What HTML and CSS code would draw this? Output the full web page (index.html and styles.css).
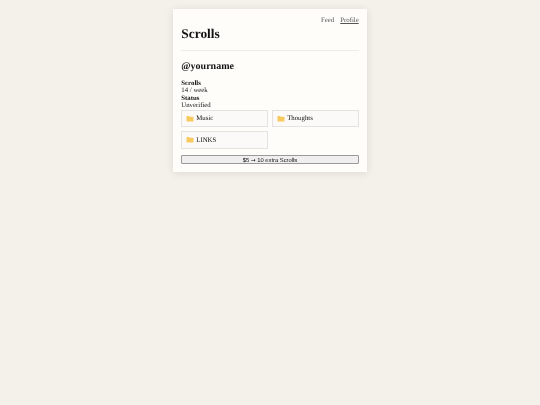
FILE: index.html
```html
<!DOCTYPE html>
<html lang="en">
<head>
    <meta charset="UTF-8">
    <meta name="viewport" content="width=device-width, initial-scale=1.0">
    <title>Scrolls</title>
    <link rel="stylesheet" href="styles.css">
</head>
<body>
    <div class="card">
        <nav class="nav">
            <a href="#" class="nav-link">Feed</a>
            <a href="#" class="nav-link current">Profile</a>
        </nav>
        <h1 class="title">Scrolls</h1>
        <hr class="divider">
        <h2 class="username">@yourname</h2>

        <div class="stats">
            <div><b>Scrolls</b></div>
            <div>14 / week</div>
            <div><b>Status</b></div>
            <div>Unverified</div>
        </div>

        <div class="folders">
            <a href="#" class="folder">
                <svg class="folder-icon" viewBox="0 0 16 14"><path d="M1 3a1 1 0 0 1 1-1h4l1.500 1.500H14a1 1 0 0 1 1 1V12a1 1 0 0 1-1 1H2a1 1 0 0 1-1-1z" fill="#f7ca5e"/></svg>
                Music
            </a>
            <a href="#" class="folder">
                <svg class="folder-icon" viewBox="0 0 16 14"><path d="M1 3a1 1 0 0 1 1-1h4l1.500 1.500H14a1 1 0 0 1 1 1V12a1 1 0 0 1-1 1H2a1 1 0 0 1-1-1z" fill="#f7ca5e"/></svg>
                Thoughts
            </a>
            <a href="#" class="folder">
                <svg class="folder-icon" viewBox="0 0 16 14"><path d="M1 3a1 1 0 0 1 1-1h4l1.500 1.500H14a1 1 0 0 1 1 1V12a1 1 0 0 1-1 1H2a1 1 0 0 1-1-1z" fill="#f7ca5e"/></svg>
                LINKS
            </a>
        </div>

        <button class="buy-button">$5 <span class="arrow">→</span> 10 extra Scrolls</button>
    </div>
</body>
</html>
```

FILE: styles.css
```css
body {
    font-family: "Liberation Serif", "Times New Roman", serif;
    font-size: 6.8px;
    line-height: 7.4px;
    text-rendering: geometricPrecision;
    background-color: #f4f1ea;
    color: #111;
    margin: 0;
    padding: 8.5px 0 0;
    display: flex;
    justify-content: center;
    align-items: flex-start;
    min-height: 396px;
}

.card {
    background-color: #fffdfa;
    width: 177.400px;
    padding: 8px 8.300px 8px;
    box-shadow: 0 1px 8px rgba(0, 0, 0, 0.1);
    display: flex;
    flex-direction: column;
    will-change: transform;
}

.nav {
    display: flex;
    justify-content: flex-end;
    gap: 6px;
    height: 7.400px;
}

.nav-link {
    color: #555;
    text-decoration: none;
}

.nav-link.current {
    text-decoration: underline;
}

.title {
    font-size: 13.400px;
    line-height: 16px;
    margin: 2px 0 0;
    color: #111;
}

.divider {
    border: none;
    border-top: 1px solid #eeece7;
    margin: 7.600px 0 0;
    width: 100%;
}

.username {
    font-size: 10px;
    line-height: 12px;
    margin: 9.600px 0 0;
    color: #111;
}

.stats {
    margin-top: 7.500px;
}

.folders {
    display: grid;
    grid-template-columns: 1fr 1fr;
    gap: 4.300px;
}

.folder {
    display: flex;
    align-items: center;
    gap: 2px;
    height: 14.300px;
    padding: 1px 4px 0;
    background-color: #fbfaf9;
    border: 1px solid #e4e3e0;
    color: #111;
    text-decoration: none;
}

.folder-icon {
    width: 8px;
    height: 7px;
    margin-top: -1px;
}

.buy-button {
    font-family: "Liberation Sans", Arial, sans-serif;
    font-size: 5.800px;
    text-rendering: geometricPrecision;
    height: 9.400px;
    line-height: 7px;
    margin-top: 6px;
    padding: 2px 0 0;
    background-color: #efefef;
    border: 1px solid #999;
    border-radius: 1px;
    color: #111;
    cursor: pointer;
}

.arrow {
    font-family: "DejaVu Sans", sans-serif;
}
```
